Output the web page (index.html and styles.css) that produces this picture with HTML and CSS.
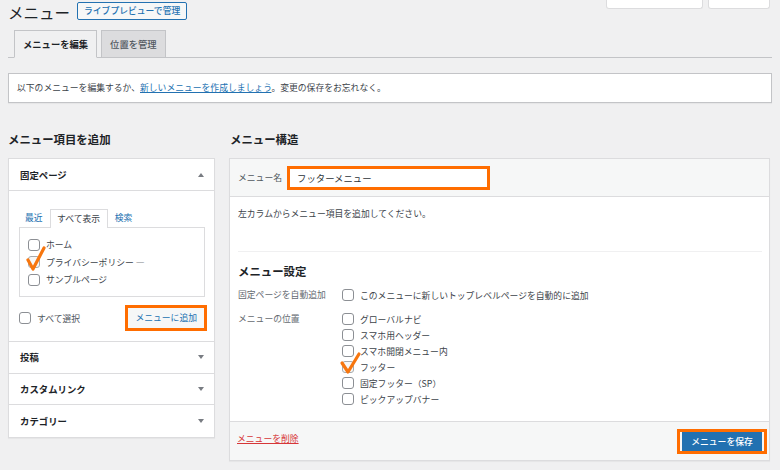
FILE: index.html
```html
<!DOCTYPE html>
<html lang="ja">
<head>
<meta charset="utf-8">
<link rel="stylesheet" href="styles.css">
</head>
<body>
<div class="wrap">
  <div class="top">
    <h1 class="title">メニュー</h1>
    <span class="btn-outline">ライブプレビューで管理</span>
    <div class="meta">
      <span class="meta-tab t1"></span>
      <span class="meta-tab t2"></span>
    </div>
  </div>

  <nav class="tabs">
    <span class="tab active">メニューを編集</span>
    <span class="tab">位置を管理</span>
  </nav>

  <div class="notice">以下のメニューを編集するか、<a class="link">新しいメニューを作成しましょう</a>。変更の保存をお忘れなく。</div>

  <div class="cols">
    <div class="col-left">
      <h2 class="col-title">メニュー項目を追加</h2>
      <div class="acc">
        <div class="acc-head">固定ページ<span class="arrow up"></span></div>
        <div class="acc-body">
          <div class="subtabs">
            <span class="sublink">最近</span>
            <span class="subtab">すべて表示</span>
            <span class="sublink">検索</span>
          </div>
          <div class="panel">
            <div class="row"><span class="cb"></span>ホーム</div>
            <div class="row"><span class="cb checked"><svg class="check" viewBox="0 0 22 26"><path d="M2 13 L7 22 L18 1"/></svg></span>プライバシーポリシー —</div>
            <div class="row"><span class="cb"></span>サンプルページ</div>
          </div>
          <div class="actions">
            <div class="row"><span class="cb"></span><span class="muted">すべて選択</span></div>
            <span class="hl"><span class="btn-sec">メニューに追加</span></span>
          </div>
        </div>
        <div class="acc-head closed">投稿<span class="arrow"></span></div>
        <div class="acc-head closed">カスタムリンク<span class="arrow"></span></div>
        <div class="acc-head closed last">カテゴリー<span class="arrow"></span></div>
      </div>
    </div>

    <div class="col-right">
      <h2 class="col-title">メニュー構造</h2>
      <div class="menu-box">
        <div class="mb-head">
          <span class="lbl">メニュー名</span>
          <span class="hl"><span class="input">フッターメニュー</span></span>
        </div>
        <div class="mb-body">
          <p class="hint">左カラムからメニュー項目を追加してください。</p>
          <div class="divider"></div>
          <h3 class="set-title">メニュー設定</h3>
          <div class="set-row">
            <span class="set-lbl">固定ページを自動追加</span>
            <div class="opts">
              <div class="opt"><span class="cb"></span>このメニューに新しいトップレベルページを自動的に追加</div>
            </div>
          </div>
          <div class="set-row">
            <span class="set-lbl">メニューの位置</span>
            <div class="opts">
              <div class="opt"><span class="cb"></span>グローバルナビ</div>
              <div class="opt"><span class="cb"></span>スマホ用ヘッダー</div>
              <div class="opt"><span class="cb"></span>スマホ開閉メニュー内</div>
              <div class="opt"><span class="cb checked"><svg class="check" viewBox="0 0 22 26"><path d="M2 11 L8 20 L19 2"/></svg></span>フッター</div>
              <div class="opt"><span class="cb"></span>固定フッター（SP）</div>
              <div class="opt"><span class="cb"></span>ピックアップバナー</div>
            </div>
          </div>
        </div>
        <div class="mb-foot">
          <span class="del">メニューを削除</span>
          <span class="hl hl-save"><span class="btn-primary">メニューを保存</span></span>
        </div>
      </div>
    </div>
  </div>
</div>
</body>
</html>
```

FILE: styles.css
```css
* { box-sizing: border-box; }
html, body { margin: 0; padding: 0; background: #f0f0f1; }
body {
  font-family: "Noto Sans CJK JP", "Noto Sans", sans-serif;
  color: #3c434a;
  font-size: 8.8px;
  width: 780px;
  height: 470px;
  overflow: hidden;
}
.wrap { padding: 0 8px; }

/* top */
.top { display: flex; align-items: flex-start; height: 22px; padding-top: 2px; }
.title { margin: 0; font-size: 15.5px; font-weight: 400; line-height: 20px; color: #1d2327; }
.btn-outline {
  margin-left: 7px; height: 18px; line-height: 16px; padding: 0 6px;
  border: 1px solid #2271b1; border-radius: 2px; color: #2271b1;
  font-size: 8.8px; font-weight: 500; background: #f6f7f7;
}
.meta { margin-left: auto; display: flex; gap: 5px; margin-top: -2px; margin-right: 2px; }
.meta-tab {
  display: block; height: 9px; background: #fff;
  border: 1px solid #dcdcde; border-top: none; border-radius: 0 0 3px 3px;
}
.t1 { width: 97px; }
.t2 { width: 62px; }

/* tabs */
.tabs {
  display: flex; gap: 4px; padding-left: 6px; margin-top: 8px;
  height: 28px; border-bottom: 1px solid #c3c4c7;
}
.tab {
  height: 28px; margin-bottom: -1px; padding: 0 8px; line-height: 26px;
  border: 1px solid #c3c4c7; background: #dcdcde;
  font-size: 9.3px; font-weight: 500; color: #50575e;
}
.tab.active { background: #f0f0f1; border-bottom-color: #f0f0f1; color: #1d2327; font-weight: 700; }

/* notice */
.notice {
  margin-top: 15px; height: 30px; background: #fff; border: 1px solid #c3c4c7;
  padding: 0 8px; line-height: 28px; font-size: 8.8px;
  box-shadow: 0 1px 1px rgba(0,0,0,.04);
}
.link { color: #2271b1; text-decoration: underline; }

/* columns */
.cols { display: flex; gap: 14px; margin-top: 28px; align-items: flex-start; }
.col-left { width: 207px; flex: none; }
.col-right { width: 541px; flex: none; }
.col-title { margin: 0 0 11px; font-size: 11.4px; line-height: 16px; font-weight: 700; color: #1d2327; }
.col-right .col-title { padding-left: 1px; }

/* accordion */
.acc { background: #fff; border: 1px solid #dcdcde; box-shadow: 0 1px 1px rgba(0,0,0,.04); }
.acc-head {
  display: flex; align-items: center; justify-content: space-between;
  height: 32px; padding: 0 10px 0 11px;
  font-size: 9.4px; font-weight: 700; color: #1d2327;
  border-bottom: 1px solid #dcdcde;
}
.acc-head.closed { height: 31.5px; }
.acc-head.last { border-bottom: none; }
.arrow {
  width: 0; height: 0;
  border-left: 3.5px solid transparent; border-right: 3.5px solid transparent;
  border-top: 4px solid #787c82;
}
.arrow.up { border-top: none; border-bottom: 4px solid #787c82; }

.acc-body { padding: 18px 7px 10px 10px; border-bottom: 1px solid #dcdcde; }
.subtabs { display: flex; align-items: flex-end; height: 18px; padding-left: 6px; gap: 7px; }
.sublink { color: #2271b1; line-height: 18px; }
.subtab {
  position: relative; z-index: 1;
  height: 19px; margin-bottom: -1px; padding: 0 6.5px; line-height: 18px;
  border: 1px solid #dcdcde; border-bottom: none; background: #fff; color: #3c434a;
}
.panel { width: 186px; height: 70px; border: 1px solid #dcdcde; padding: 8px 8px; }
.row { display: flex; align-items: center; gap: 6px; height: 17.5px; color: #3c434a; }
.muted { color: #50575e; }
.actions { display: flex; align-items: center; justify-content: space-between; height: 26px; margin-top: 8px; }

.cb {
  position: relative; flex: none; width: 12px; height: 12px;
  border: 1px solid #8c8f94; border-radius: 3px; background: #fff;
}
.cb.checked { background: #f6f7f7; border-color: #a7aaad; }
.check {
  position: absolute; left: -3px; top: -10px; width: 22px; height: 26px; overflow: visible;
}
.check path {
  fill: none; stroke: #f7760e; stroke-width: 3.2; stroke-linecap: round; stroke-linejoin: round;
}

.hl { display: inline-flex; border: 3px solid #ff6d00; }
.btn-sec {
  display: block; height: 20px; line-height: 20px; padding: 0 7px;
  background: #f6f7f7; color: #2271b1; font-size: 8.8px;
}

/* menu box */
.menu-box { background: #fff; border: 1px solid #dcdcde; box-shadow: 0 1px 1px rgba(0,0,0,.04); }
.mb-head {
  display: flex; align-items: center; gap: 5px; height: 38px; padding: 0 8px;
  background: #f6f7f7; border-bottom: 1px solid #dcdcde;
}
.lbl { color: #50575e; }
.input {
  display: block; width: 197px; height: 18px; line-height: 18px; padding-left: 7px;
  background: #fff; color: #2c3338; font-size: 9.4px;
}
.mb-body { padding: 10px 7px 14px 8px; }
.hint { margin: 0; line-height: 14px; }
.divider { height: 1px; background: #f0f0f1; margin: 30px 0 11px; }
.set-title { margin: 0 0 8px; font-size: 11.4px; line-height: 16px; font-weight: 700; color: #1d2327; }
.set-row { display: flex; margin-bottom: 8px; }
.set-row:last-child { margin-bottom: 0; }
.set-lbl { width: 104px; flex: none; line-height: 16px; color: #646970; }
.opts { display: flex; flex-direction: column; }
.opt { display: flex; align-items: center; gap: 6px; height: 16px; color: #3c434a; }

.mb-foot {
  display: flex; align-items: center; justify-content: space-between;
  height: 39px; padding: 0 2px 0 7px;
  background: #f6f7f7; border-top: 1px solid #dcdcde;
}
.del { color: #d63638; text-decoration: underline; margin-top: -5px; }
.hl-save { padding: 0 2px; }
.btn-primary {
  display: block; width: 80px; height: 19px; line-height: 19px; text-align: center;
  background: #2271b1; color: #fff; font-size: 8.8px; font-weight: 500;
}
```
